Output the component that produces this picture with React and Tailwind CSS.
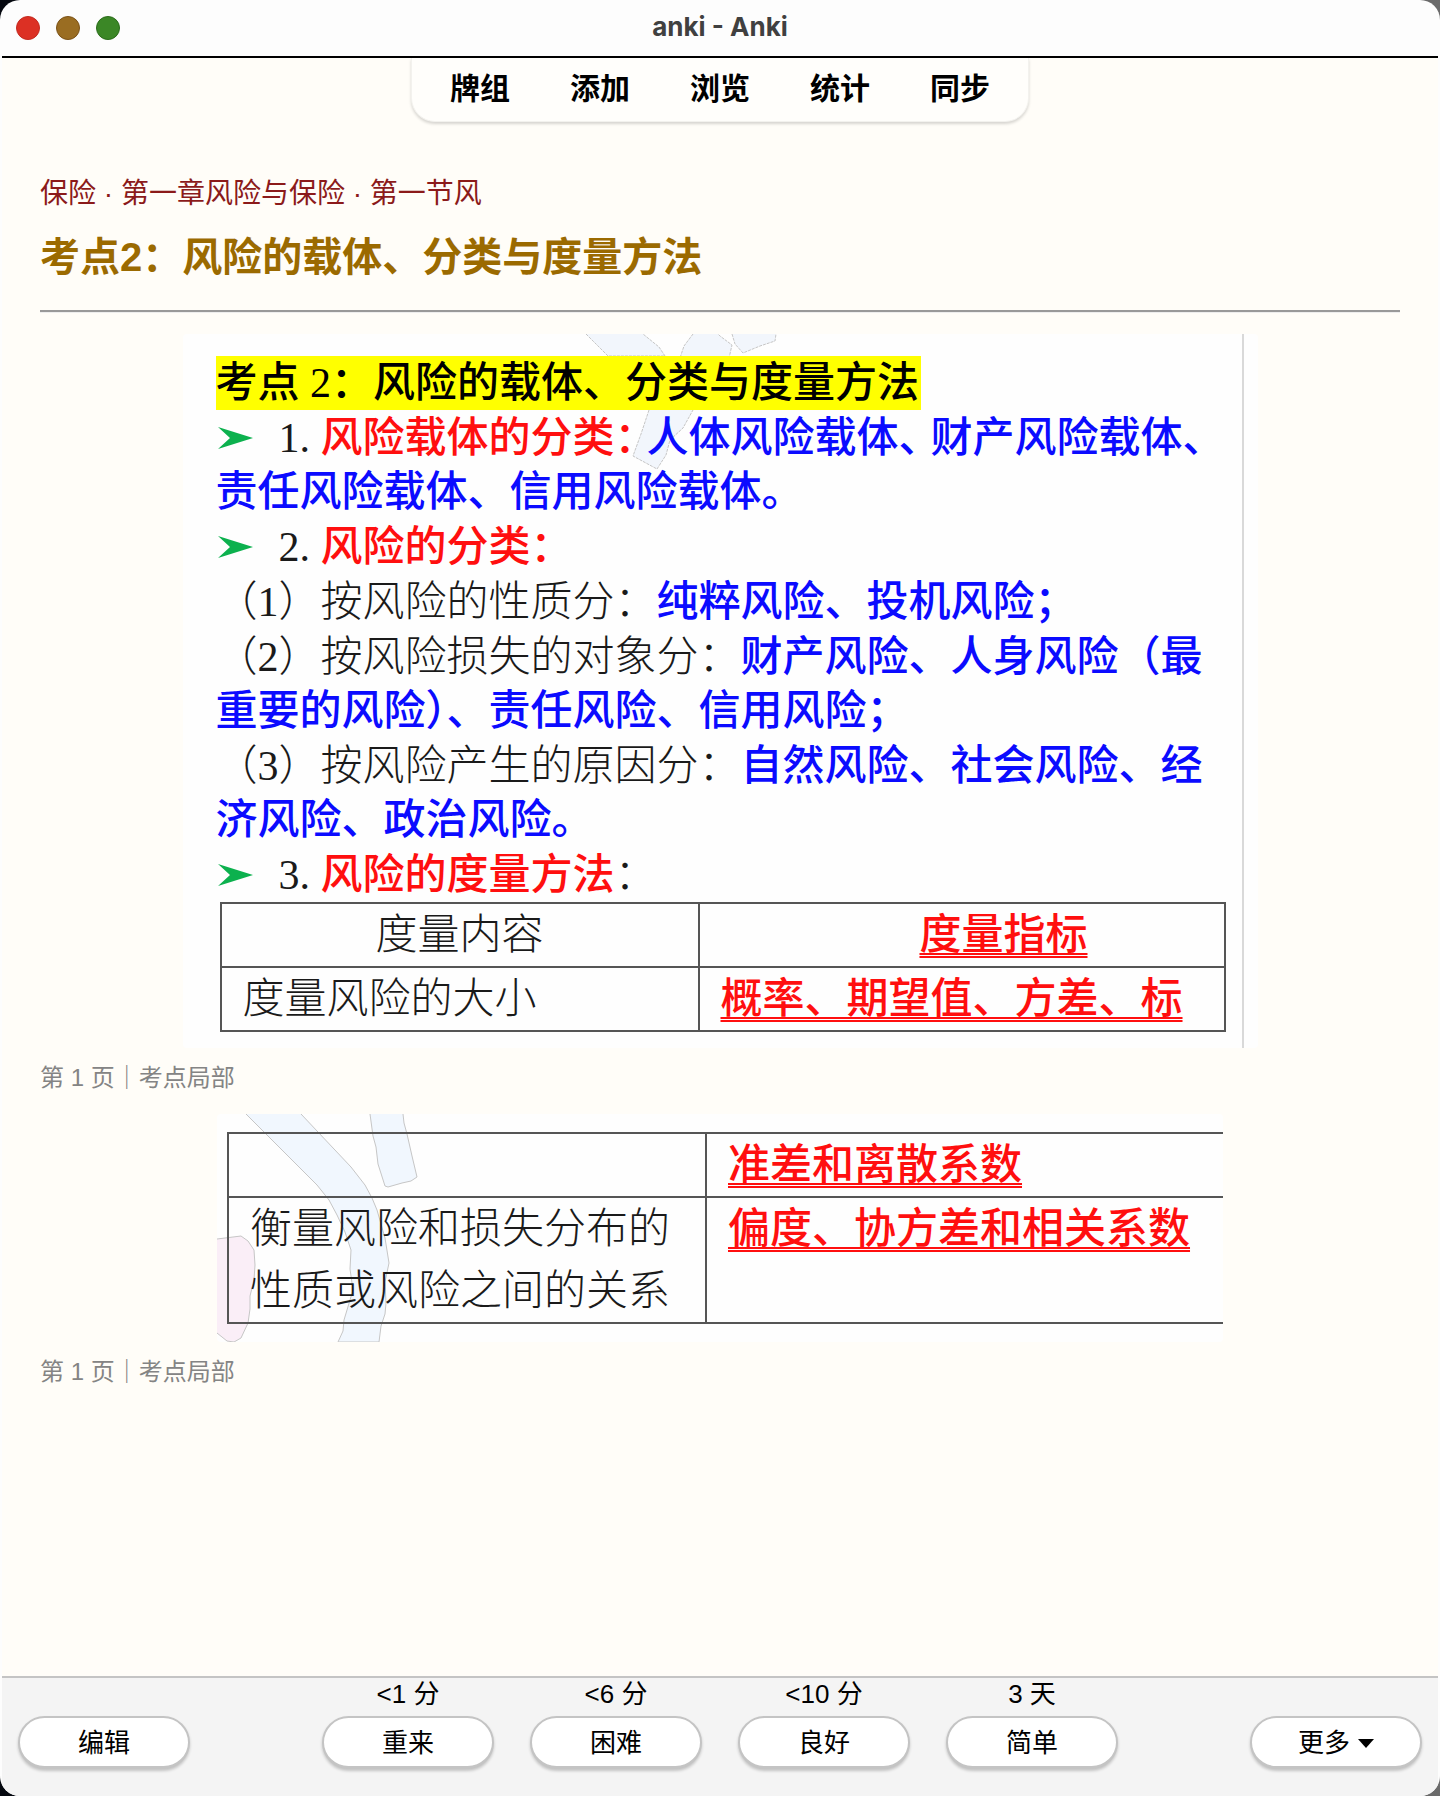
const toolbarLinks = ['牌组', '添加', '浏览', '统计', '同步'];

const answers = [
  { due: '<1 分', label: '重来' },
  { due: '<6 分', label: '困难' },
  { due: '<10 分', label: '良好' },
  { due: '3 天', label: '简单' },
];

const pillClass =
  'flex h-[53px] w-[172px] items-center justify-center gap-2 rounded-full border-2 border-b-3 border-[#c4c4c4] bg-white pt-0.5 text-[26px] leading-none text-black shadow-[0_2px_3px_rgba(0,0,0,0.2)]';

function Blue({ children }) {
  return <b className="font-medium text-[#0b0bff]">{children}</b>;
}

function Red({ children }) {
  return <b className="font-medium text-[#ff0f0f]">{children}</b>;
}

function Underlined({ children }) {
  return (
    <b className="font-medium text-[#ff0f0f] underline decoration-double decoration-2 underline-offset-4">
      {children}
    </b>
  );
}

// Half-width punctuation, used where a line is set tight
function Tight({ children }) {
  return <span className="pr-[11px] [font-feature-settings:'halt']">{children}</span>;
}

function Bullet({ number }) {
  return (
    <>
      <span className="inline-flex h-[42px] w-[63px] items-center pb-2 pl-0.5 align-middle">
        <svg width="35" height="22" viewBox="0 0 35 22" aria-hidden="true">
          <path d="M0 0 L35 11 L0 22 L12 11 Z" fill="#0cb14e" />
        </svg>
      </span>
      <span className="inline-block w-[42px]">{number}.</span>
    </>
  );
}

function Caption() {
  return <p className="mt-3 text-2xl leading-9 text-[#848484]">第 1 页｜考点局部</p>;
}

function FirstExcerpt() {
  return (
    <figure className="relative mx-auto mt-[21px] w-full max-w-[1075px] rounded-sm bg-[#fefefe] pr-3.5">
      <svg className="absolute left-0 top-0" width="620" height="140" viewBox="0 0 620 140" aria-hidden="true">
        <g fill="#f2f6fc" stroke="#c6c6c6" strokeDasharray="3 1">
          <path d="M403 0 L425 22 H482 L476 13 L460 0" />
          <path d="M510 0 L501 12 L497 24 H546 L549 11 L537 2 L535 0" />
          <path d="M549 0 L552 10 L560 19 L577 12 L592 7 L593 0" />
          <path d="M466 76 L458 100 L450 122 L474 135 L483 121 L487 106 L500 94 L510 76" />
        </g>
      </svg>

      <div className="relative border-r-2 border-[#d9d9d9] pt-[22px] pr-4 pb-4 pl-[33px] font-['Liberation_Serif','Noto_Sans_CJK_SC',serif] text-[42px] leading-[54px] font-light text-[#1a1a1a]">
        <div className="flex flex-col gap-px whitespace-nowrap">
          <p>
            <mark className="inline-block bg-[#ffff00] pr-0.5 font-medium text-black">
              考点 2：风险的载体、分类与度量方法
            </mark>
          </p>
          <p>
            <Bullet number="1" />
            <Red>
              风险载体的分类<Tight>：</Tight>
            </Red>
            <Blue>
              人体风险载体<Tight>、</Tight>财产风险载体<Tight>、</Tight>
              <br />
              责任风险载体、信用风险载体。
            </Blue>
          </p>
          <p>
            <Bullet number="2" />
            <Red>风险的分类：</Red>
          </p>
          <p>
            （1）按风险的性质分：<Blue>纯粹风险、投机风险；</Blue>
          </p>
          <p>
            （2）按风险损失的对象分：
            <Blue>
              财产风险、人身风险（最
              <br />
              重要的风险）、责任风险、信用风险；
            </Blue>
          </p>
          <p>
            （3）按风险产生的原因分：
            <Blue>
              自然风险、社会风险、经
              <br />
              济风险、政治风险。
            </Blue>
          </p>
          <p>
            <Bullet number="3" />
            <Red>风险的度量方法</Red>：
          </p>
        </div>

        <table className="ml-1 w-[calc(100%-4px)] table-fixed border-collapse leading-[62px] [&_td]:border-2 [&_td]:border-[#555] [&_th]:border-2 [&_th]:border-[#555]">
          <thead>
            <tr>
              <th className="w-[478px] p-0 font-light">度量内容</th>
              <th className="py-0 pr-0 pl-[84px]">
                <Underlined>度量指标</Underlined>
              </th>
            </tr>
          </thead>
          <tbody>
            <tr>
              <td className="px-[21px] py-0">度量风险的大小</td>
              <td className="px-[21px] py-0">
                <Underlined>概率、期望值、方差、标</Underlined>
              </td>
            </tr>
          </tbody>
        </table>
      </div>
    </figure>
  );
}

function SecondExcerpt() {
  return (
    <figure className="relative mx-auto mt-[18px] w-full max-w-[1006px] rounded-sm bg-[#fefefe] py-[18px] pl-2.5">
      <svg className="absolute left-0 top-0" width="220" height="228" viewBox="0 0 220 228" aria-hidden="true">
        <g fill="#f1f7fe" stroke="#c6c6c6">
          <path d="M29 0 L100 71 L112 86 L120 101 L128 118 L134 136 L133 155 L136 176 L130 196 L127 206 L126 217 L121 228 H162 L164 212 L168 200 L169 189 L168 168 L172 149 L168 124 L160 96 L155 84 L148 71 L134 53 L84 0" />
          <path d="M153 0 L156 22 L159 33 L161 50 L168 72 L171 73 L185 69 L194 67 L200 63 L195 42 L190 20 L187 9 L186 0" />
        </g>
        <path
          d="M0 125 L24 122 L31 127 L37 136 L38 151 L37 166 L33 182 L33 195 L31 209 L24 224 L17 228 L10 227 L0 219"
          fill="#faeef7"
          stroke="#c6c6c6"
        />
      </svg>

      <table className="relative w-full table-fixed border-collapse font-['Liberation_Serif','Noto_Sans_CJK_SC',serif] text-[42px] leading-[62px] font-light whitespace-nowrap text-[#1a1a1a] [&_td]:border-y-2 [&_td]:border-l-2 [&_td]:border-[#555]">
        <tbody>
          <tr>
            <td className="w-[478px] px-[21px] py-0"></td>
            <td className="px-[21px] py-0">
              <Underlined>准差和离散系数</Underlined>
            </td>
          </tr>
          <tr className="align-top">
            <td className="px-[21px] py-0">
              衡量风险和损失分布的
              <br />
              性质或风险之间的关系
            </td>
            <td className="px-[21px] py-0">
              <Underlined>偏度、协方差和相关系数</Underlined>
            </td>
          </tr>
        </tbody>
      </table>
    </figure>
  );
}

export default function App() {
  return (
    <div className="bg-linear-to-r from-[#05080f] to-[#6b6b6b]">
      <div className="flex min-h-screen flex-col overflow-hidden rounded-[20px] bg-[#fdfdfd] px-0.5 font-['Liberation_Sans','Noto_Sans_CJK_SC',sans-serif] text-black">
        <header className="grid h-[58px] grid-cols-[1fr_auto_1fr] items-center border-b-2 border-black px-3.5">
          <div className="flex gap-4">
            <button type="button" aria-label="关闭" className="size-6 rounded-full border border-[#c32a20] bg-[#dc3024]" />
            <button type="button" aria-label="最小化" className="size-6 rounded-full border border-[#7b5218] bg-[#9a6d22]" />
            <button type="button" aria-label="缩放" className="size-6 rounded-full border border-[#2b6c1b] bg-[#3b8726]" />
          </div>
          <span className="pb-0.5 font-['Inter',sans-serif] text-[26px] leading-8 font-bold text-[#404040]">
            anki - Anki
          </span>
        </header>

        <main className="flex-1 bg-[#fffdf8] pb-10">
          <nav className="mx-auto flex h-16 w-fit rounded-b-[24px] border border-t-0 border-[#f3f2ee] bg-[#fffefb] px-2 shadow-[0_2px_3px_rgba(0,0,0,0.16)]">
            {toolbarLinks.map((label) => (
              <a key={label} href="#" className="px-[30px] text-[30px] leading-[62px] font-bold">
                {label}
              </a>
            ))}
          </nav>

          <article className="px-[38px] pt-[47px]">
            <p className="text-[28px] leading-[50px] text-[#8b1a1a]">保险 · 第一章风险与保险 · 第一节风</p>
            <h1 className="mt-2 text-[40px] leading-[60px] font-bold text-[#9b6a00]">
              考点2：风险的载体、分类与度量方法
            </h1>
            <hr className="mt-[23px] border-t-2 border-b border-t-[#999] border-b-[#eee]" />

            <FirstExcerpt />
            <Caption />
            <SecondExcerpt />
            <Caption />
          </article>
        </main>

        <footer className="grid grid-cols-[1fr_auto_1fr] items-end border-t-2 border-[#c4c4c4] bg-[#f4f4f4] px-4 pb-[27px]">
          <button type="button" className={pillClass}>
            编辑
          </button>
          <div className="flex gap-9">
            {answers.map(({ due, label }) => (
              <div key={label} className="flex flex-col items-center gap-1.5">
                <span className="text-[26px] leading-8">{due}</span>
                <button type="button" className={pillClass}>
                  {label}
                </button>
              </div>
            ))}
          </div>
          <button type="button" className={`${pillClass} justify-self-end`}>
            更多
            <svg width="16" height="9" viewBox="0 0 16 9" aria-hidden="true">
              <path d="M0 0 H16 L8 9 Z" fill="currentColor" />
            </svg>
          </button>
        </footer>
      </div>
    </div>
  );
}
